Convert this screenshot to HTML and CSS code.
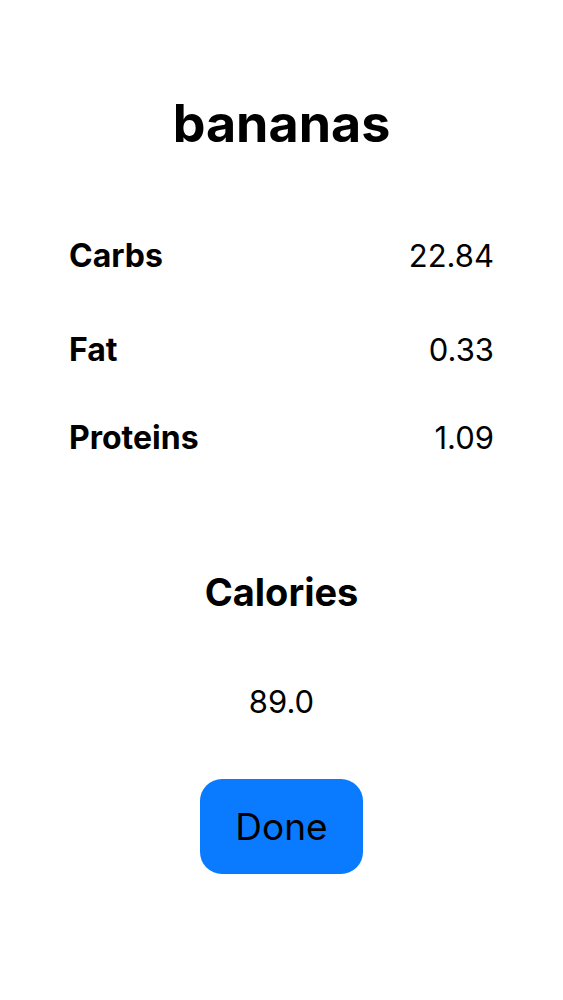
FILE: index.html
```html
<!DOCTYPE html>
<html lang="en">
<head>
    <meta charset="UTF-8">
    <meta name="viewport" content="width=device-width, initial-scale=1.0">
    <title>bananas</title>
    <link rel="stylesheet" href="styles.css">
</head>
<body>
    <div class="screen">
        <h1 class="food-name">bananas</h1>

        <div class="macros">
            <div class="macro-row">
                <span class="macro-label">Carbs</span>
                <span class="macro-value">22.84</span>
            </div>
            <div class="macro-row">
                <span class="macro-label">Fat</span>
                <span class="macro-value">0.33</span>
            </div>
            <div class="macro-row">
                <span class="macro-label">Proteins</span>
                <span class="macro-value">1.09</span>
            </div>
        </div>

        <h2 class="calories-title">Calories</h2>
        <div class="calories-value">89.0</div>

        <button class="done-button">Done</button>
    </div>
</body>
</html>
```

FILE: styles.css
```css
* {
    margin: 0;
    padding: 0;
    box-sizing: border-box;
}

body {
    font-family: Inter, "Noto Sans", sans-serif;
    background: #fff;
    color: #000;
}

.screen {
    display: flex;
    flex-direction: column;
    align-items: center;
    padding-top: 93px;
}

.food-name {
    font-size: 52px;
    line-height: 62px;
    font-weight: 700;
}

.macros {
    width: 100%;
    display: flex;
    flex-direction: column;
    gap: 51px;
    padding: 0 69px;
    margin-top: 82px;
}

.macro-row {
    display: flex;
    justify-content: space-between;
    align-items: baseline;
    font-size: 31px;
    line-height: 37px;
}

.macro-row:first-child {
    margin-bottom: 6px;
}

.macro-label {
    font-size: 32px;
    font-weight: 700;
}

.macro-value {
    font-weight: 400;
}

.calories-title {
    margin-top: 114px;
    font-size: 38px;
    line-height: 44px;
    font-weight: 700;
}

.calories-value {
    margin-top: 69px;
    font-size: 31px;
    line-height: 37px;
}

.done-button {
    margin-top: 59px;
    width: 163px;
    height: 95px;
    border: none;
    border-radius: 22px;
    background: #0a7aff;
    color: #000;
    font-family: inherit;
    font-size: 37px;
    line-height: 44px;
    display: flex;
    align-items: center;
    justify-content: center;
    cursor: pointer;
}
```
